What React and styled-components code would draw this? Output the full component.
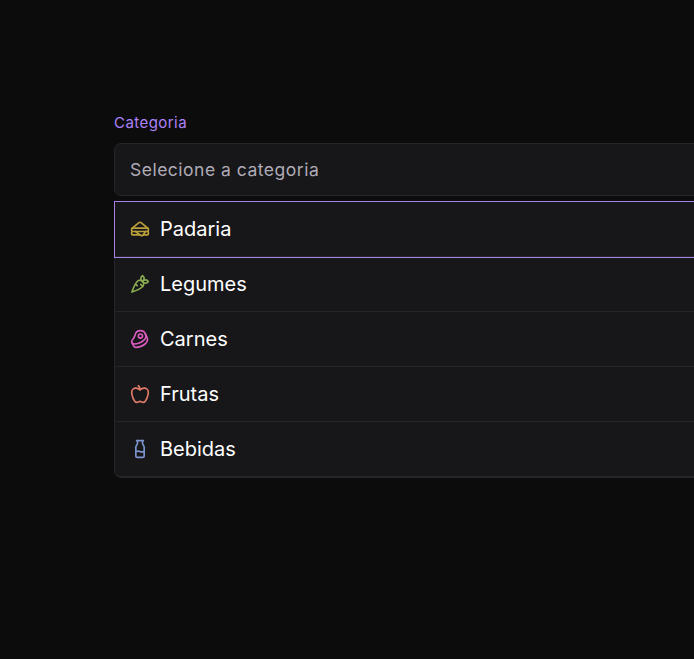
import React from "react";
import styled, { createGlobalStyle } from "styled-components";
import { LuSandwich, LuCarrot, LuBeef, LuApple, LuMilk } from "react-icons/lu";

const Global = createGlobalStyle`
  * { box-sizing: border-box; }
  html, body { margin: 0; background: #0c0c0d; overflow: hidden; }
  body { font-family: Inter, sans-serif; }
`;
const Page = styled.main`
  min-height: 659px;
  padding: 114px 0 0 114px;
  overflow: hidden;
`;
const Field = styled.div`
  width: 640px;
`;
const Label = styled.label`
  display: block;
  height: 29px;
  line-height: 18px;
  font-size: 15px;
  letter-spacing: 0.45px;
  color: #ac82f8;
`;
const Trigger = styled.div`
  display: flex;
  align-items: center;
  height: 53px;
  padding: 0 15px;
  border: 1px solid #252529;
  border-radius: 7px;
  background: #17171a;
  color: #afabb6;
  font-size: 17.5px;
  letter-spacing: 0.5px;
`;
const Menu = styled.ul`
  list-style: none;
  margin: 5px 0 0;
  padding: 0;
  border: 1px solid #252529;
  border-radius: 7px;
  background: #17171a;
`;
const Option = styled.li`
  display: flex;
  align-items: center;
  gap: 10px;
  height: 55px;
  padding: 0 15px;
  border-bottom: 1px solid #252529;
  outline: ${(p) => (p.$focused ? "1px solid #a881e6" : "none")};
  color: #fff;
  font-size: 20px;
  svg { color: ${(p) => p.$tint}; }
  &:last-child { border-radius: 0 0 6px 6px; }
`;
const items = [
  { name: "Padaria", tint: "#bb9f3a", Icon: LuSandwich },
  { name: "Legumes", tint: "#8cad51", Icon: LuCarrot },
  { name: "Carnes", tint: "#db5bbf", Icon: LuBeef },
  { name: "Frutas", tint: "#e07b67", Icon: LuApple },
  { name: "Bebidas", tint: "#7b94cb", Icon: LuMilk },
];
export default function App() {
  return (
    <Page>
      <Global />
      <Field>
        <Label>Categoria</Label>
        <Trigger>Selecione a categoria</Trigger>
        <Menu>
          {items.map(({ name, tint, Icon }, i) => (
            <Option key={name} $tint={tint} $focused={i === 0}>
              <Icon size={20} />
              {name}
            </Option>
          ))}
        </Menu>
      </Field>
    </Page>
  );
}
